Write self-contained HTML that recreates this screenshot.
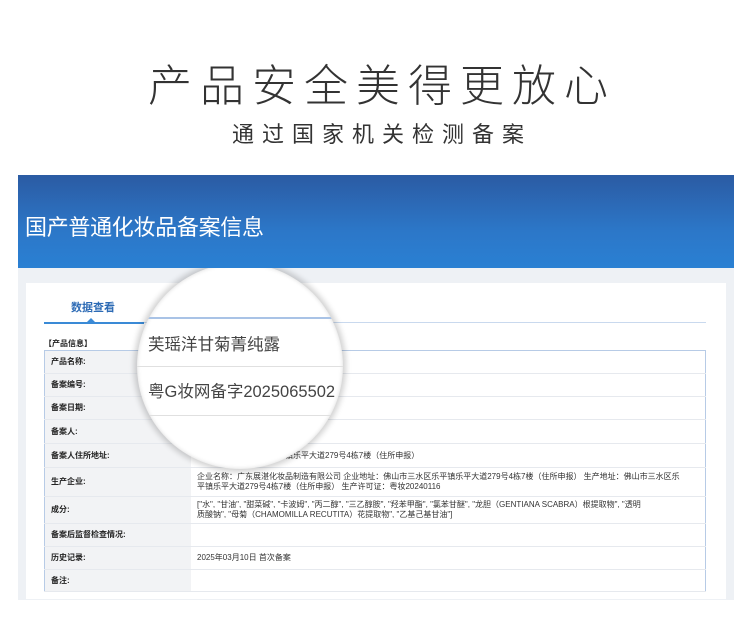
<!DOCTYPE html><html><head><meta charset="utf-8"><style>
body{margin:0;width:750px;height:641px;background:#fff;position:relative;overflow:hidden;font-family:"Liberation Sans","Noto Sans CJK SC",sans-serif}
.a{position:absolute;white-space:nowrap}
.band{left:18px;top:175px;width:716px;height:93px;background:linear-gradient(180deg,#2b5ba3 0%,#2c77c8 60%,#2a80d3 100%);z-index:2}
.gray{left:18px;top:268px;width:716px;height:332px;background:#eef1f5}
.card{left:26px;top:283px;width:700px;height:316px;background:#fff}
table{position:absolute;left:44px;top:350px;width:662px;border-collapse:collapse;border:1px solid #b7cbe6;font-size:8px;color:#333}
td{border-bottom:1px solid #e6e9ee;padding:0 6px;line-height:10px}
td.l{width:134px;background:#f2f3f5;font-weight:bold;color:#222}
</style></head><body>
<div class="a" style="left:148px;top:50px;font-size:44px;letter-spacing:8px;color:#333;font-weight:300">产品安全美得更放心</div>
<div class="a" style="left:232px;top:117px;font-size:22px;letter-spacing:8px;color:#333">通过国家机关检测备案</div>
<div class="a band"></div>
<div class="a" style="left:25px;top:210px;font-size:22px;color:#fff;letter-spacing:-0.3px;z-index:3">国产普通化妆品备案信息</div>
<div class="a gray"></div>
<div class="a card"></div>
<div class="a" style="left:71px;top:299px;font-size:11px;font-weight:bold;color:#2d6bb5">数据查看</div>
<div class="a" style="left:44px;top:322px;width:662px;height:1px;background:#c9d9ee"></div>
<div class="a" style="left:44px;top:322px;width:100px;height:2px;background:#3a8ad6"></div>
<div class="a" style="left:87px;top:318px;width:0;height:0;border-left:4px solid transparent;border-right:4px solid transparent;border-bottom:4px solid #3a8ad6"></div>
<div class="a" style="left:44px;top:338px;font-size:8px;font-weight:bold;color:#222">【产品信息】</div>
<table>
<tr style="height:23px"><td class="l">产品名称:</td><td></td></tr>
<tr style="height:23px"><td class="l">备案编号:</td><td></td></tr>
<tr style="height:23px"><td class="l">备案日期:</td><td></td></tr>
<tr style="height:24px"><td class="l">备案人:</td><td></td></tr>
<tr style="height:24px"><td class="l">备案人住所地址:</td><td>广东省佛山市三水区乐平镇乐平大道279号4栋7楼（住所申报）</td></tr>
<tr style="height:29px"><td class="l">生产企业:</td><td>企业名称：广东展湛化妆品制造有限公司 企业地址：佛山市三水区乐平镇乐平大道279号4栋7楼（住所申报） 生产地址：佛山市三水区乐<br>平镇乐平大道279号4栋7楼（住所申报） 生产许可证：粤妆20240116</td></tr>
<tr style="height:27px"><td class="l">成分:</td><td>["水", "甘油", "甜菜碱", "卡波姆", "丙二醇", "三乙醇胺", "羟苯甲酯", "氯苯甘醚", "龙胆（GENTIANA SCABRA）根提取物", "透明<br>质酸钠", "母菊（CHAMOMILLA RECUTITA）花提取物", "乙基己基甘油"]</td></tr>
<tr style="height:23px"><td class="l">备案后监督检查情况:</td><td></td></tr>
<tr style="height:23px"><td class="l">历史记录:</td><td>2025年03月10日 首次备案</td></tr>
<tr style="height:22px"><td class="l">备注:</td><td></td></tr>
</table>
<div class="a" style="left:137px;top:263px;width:206px;height:206px;border-radius:50%;background:#fff;overflow:hidden;box-shadow:0 0 6px 3px rgba(0,0,0,.18),inset 0 0 4px rgba(0,0,0,.15)">
<div class="a" style="left:0;top:54px;width:206px;height:2px;background:#a9c3e6"></div>
<div class="a" style="left:0;top:103px;width:206px;height:1px;background:#e0e0e0"></div>
<div class="a" style="left:0;top:152px;width:206px;height:1px;background:#e0e0e0"></div>
<div class="a" style="left:11px;top:68px;font-size:16.5px;color:#444">芙瑶洋甘菊菁纯露</div>
<div class="a" style="left:11px;top:115px;font-size:16.5px;color:#444">粤G妆网备字2025065502</div>
</div>
</body></html>
